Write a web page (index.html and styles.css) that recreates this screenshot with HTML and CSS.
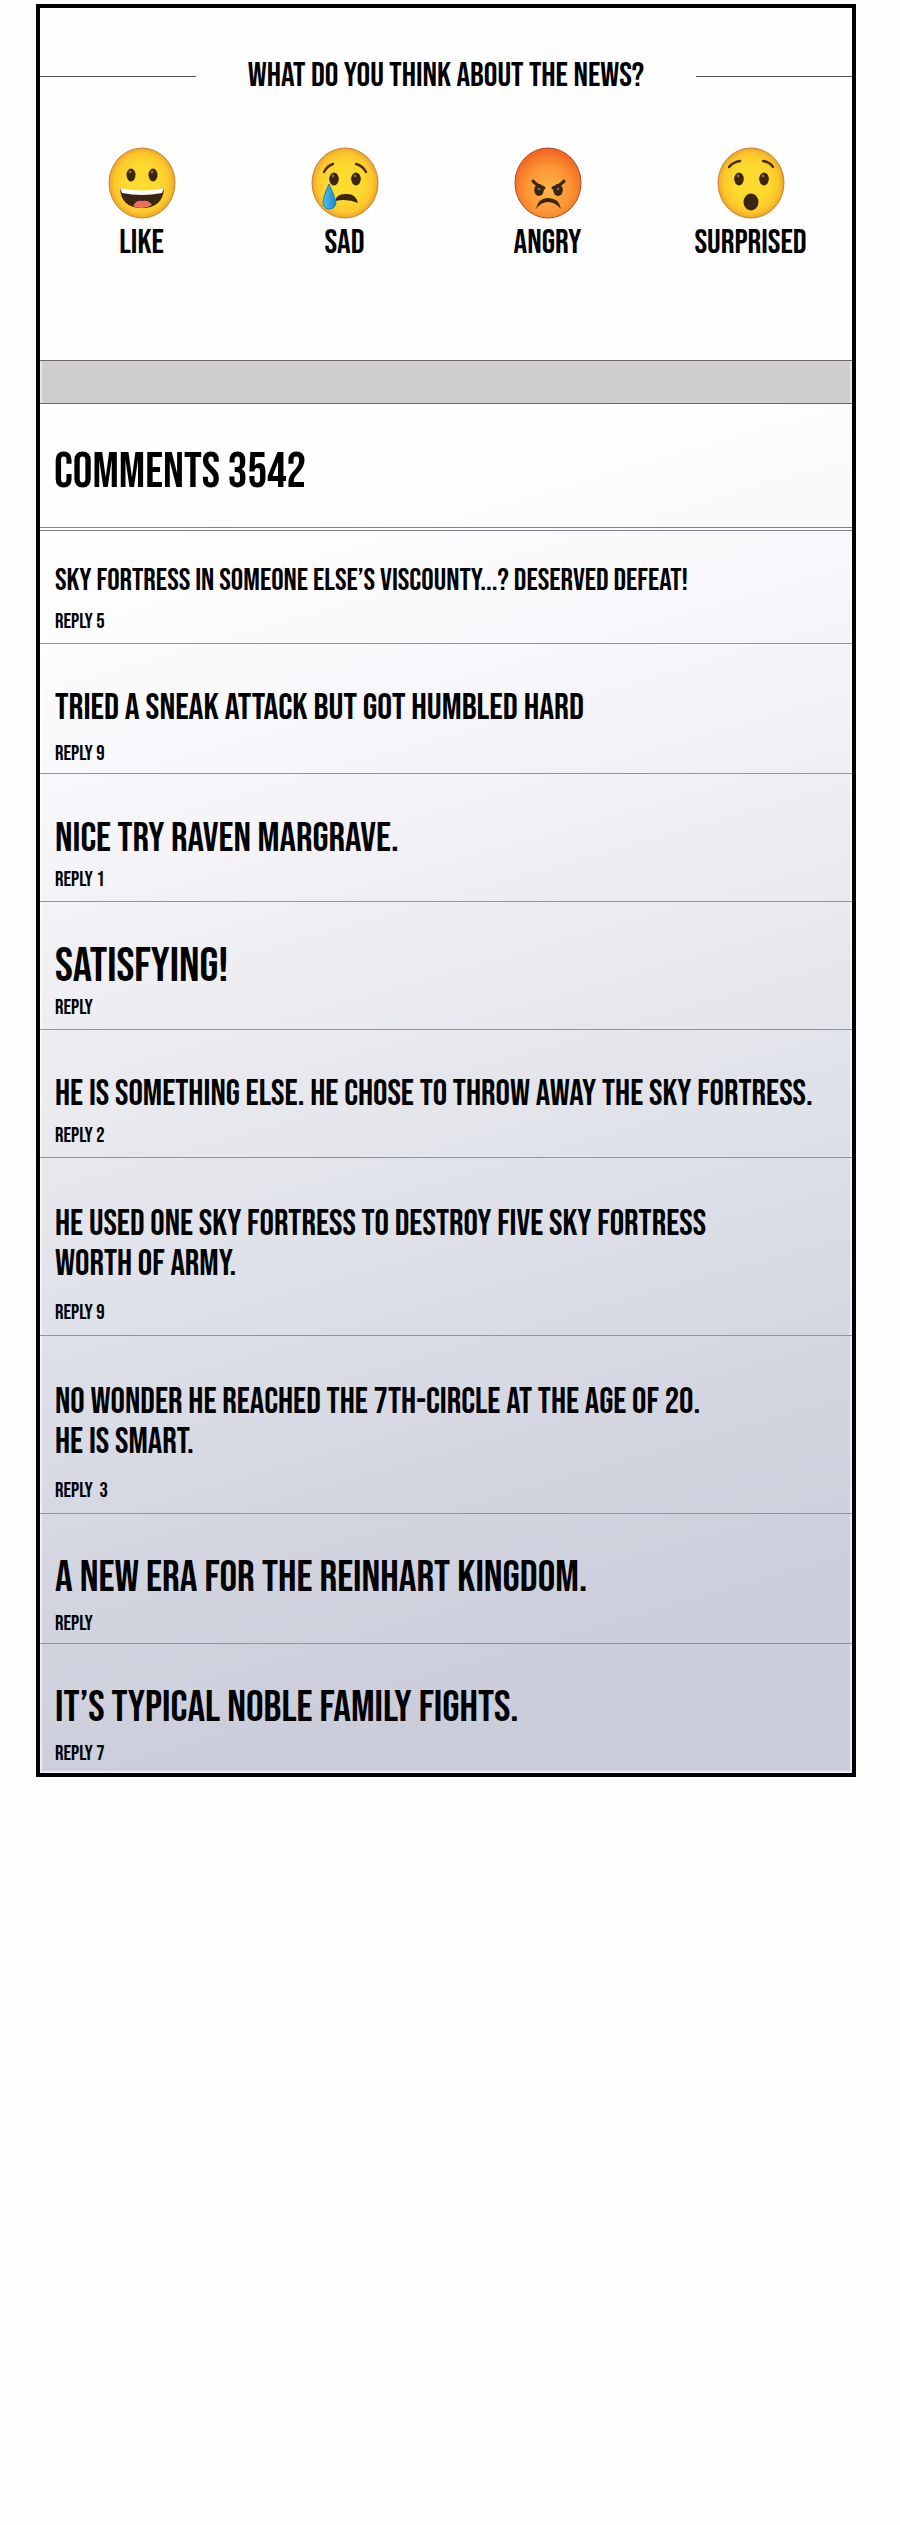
FILE: index.html
```html
<!DOCTYPE html>
<html lang="en">
<head>
    <meta charset="UTF-8">
    <meta name="viewport" content="width=device-width, initial-scale=1.0">
    <title>News Comments</title>
    <link rel="stylesheet" href="styles.css">
</head>
<body>
    <!-- Gradients shared by the faces -->
    <svg class="defs" width="0" height="0" aria-hidden="true">
        <defs>
            <radialGradient id="yellow">
                <stop offset="0.5" stop-color="#fddb2e"/>
                <stop offset="0.85" stop-color="#fbc62b"/>
                <stop offset="1" stop-color="#efa329"/>
            </radialGradient>
            <radialGradient id="red" cx="0.5" cy="0.6" r="0.66">
                <stop offset="0" stop-color="#fdb648"/>
                <stop offset="0.5" stop-color="#fb9634"/>
                <stop offset="1" stop-color="#f0561e"/>
            </radialGradient>
            <linearGradient id="tear" x1="0" x2="1">
                <stop offset="0" stop-color="#51c2ee"/>
                <stop offset="1" stop-color="#1687c9"/>
            </linearGradient>
        </defs>
    </svg>

    <main class="container">
        <section class="poll">
            <h2 class="poll-title">WHAT DO YOU THINK ABOUT THE NEWS?</h2>
            <div class="reactions">
                <button type="button" class="reaction">
                    <svg class="face" viewBox="0 0 68 72" aria-hidden="true">
                        <ellipse cx="34" cy="36" rx="33" ry="35" fill="url(#yellow)" stroke="#c88235"/>
                        <g fill="#3b2413">
                            <ellipse cx="23" cy="28" rx="4.5" ry="6.5"/>
                            <ellipse cx="45" cy="28" rx="4.5" ry="6.5"/>
                            <path d="M12 41Q34 48 56 41Q55 61 34 61Q13 61 12 41Z"/>
                        </g>
                        <path d="M12 41Q34 46 56 41L54 46Q34 50 14 46Z" fill="#fff"/>
                        <path d="M25 59Q28 53 34 54Q41 53 44 58Q39 61 34 61Q29 61 25 59Z" fill="#ed6d61"/>
                        <g fill="#8d6a4b">
                            <circle cx="22" cy="25" r="1.4"/>
                            <circle cx="44" cy="25" r="1.4"/>
                        </g>
                    </svg>
                    LIKE
                </button>
                <button type="button" class="reaction">
                    <svg class="face" viewBox="0 0 68 72" aria-hidden="true">
                        <ellipse cx="34" cy="36" rx="33" ry="35" fill="url(#yellow)" stroke="#c88235"/>
                        <g fill="#3b2413">
                            <ellipse cx="23" cy="32" rx="4.8" ry="6.5"/>
                            <ellipse cx="45" cy="32" rx="4.8" ry="6.5"/>
                            <path d="M24 54Q26 46 36 47Q45 47 47 56Q36 51 24 54Z"/>
                        </g>
                        <g fill="none" stroke="#4a2d12" stroke-width="2.4" stroke-linecap="round">
                            <path d="M13 25Q16 19 22 17"/>
                            <path d="M45 17Q52 19 55 25"/>
                        </g>
                        <path d="M18 37Q12 50 12 56Q13 62 18 62Q24 62 25 56Q24 50 18 37Z" fill="url(#tear)" stroke="#277da8"/>
                        <g fill="#8d6a4b">
                            <circle cx="22" cy="29" r="1.4"/>
                            <circle cx="44" cy="29" r="1.4"/>
                        </g>
                    </svg>
                    SAD
                </button>
                <button type="button" class="reaction">
                    <svg class="face" viewBox="0 0 68 72" aria-hidden="true">
                        <ellipse cx="34" cy="36" rx="33" ry="35" fill="url(#red)" stroke="#b9451d"/>
                        <g fill="#3b2413">
                            <ellipse cx="25" cy="43" rx="4.8" ry="6"/>
                            <ellipse cx="44" cy="43" rx="4.8" ry="6"/>
                            <path d="M22 62Q24 51 34 51Q45 51 47 62Q41 55 34 55Q27 55 22 62Z"/>
                        </g>
                        <g fill="none" stroke="#3b2413" stroke-width="3" stroke-linecap="round">
                            <path d="M19 34Q22 38 30 41"/>
                            <path d="M50 34Q47 38 39 41"/>
                        </g>
                        <g fill="#8d6a4b">
                            <circle cx="25" cy="42" r="1.3"/>
                            <circle cx="44" cy="42" r="1.3"/>
                        </g>
                    </svg>
                    ANGRY
                </button>
                <button type="button" class="reaction">
                    <svg class="face" viewBox="0 0 68 72" aria-hidden="true">
                        <ellipse cx="34" cy="36" rx="33" ry="35" fill="url(#yellow)" stroke="#c88235"/>
                        <g fill="#3b2413">
                            <ellipse cx="22" cy="32" rx="4.8" ry="6.5"/>
                            <ellipse cx="47" cy="32" rx="4.8" ry="6.5"/>
                            <ellipse cx="34" cy="55" rx="7.5" ry="8.5"/>
                        </g>
                        <g fill="none" stroke="#4a2d12" stroke-width="2.4" stroke-linecap="round">
                            <path d="M12 20Q16 15 23 14"/>
                            <path d="M46 14Q53 15 56 20"/>
                        </g>
                        <g fill="#8d6a4b">
                            <circle cx="21" cy="29" r="1.4"/>
                            <circle cx="46" cy="29" r="1.4"/>
                        </g>
                    </svg>
                    SURPRISED
                </button>
            </div>
        </section>

        <div class="divider"></div>

        <section class="comments">
            <h1 class="comments-title">COMMENTS 3542</h1>

            <article class="comment first">
                <p class="text small">SKY FORTRESS IN SOMEONE ELSE’S VISCOUNTY...? DESERVED DEFEAT!</p>
                <button type="button" class="reply">REPLY 5</button>
            </article>
            <article class="comment roomy">
                <p class="text regular">TRIED A SNEAK ATTACK BUT GOT HUMBLED HARD</p>
                <button type="button" class="reply">REPLY 9</button>
            </article>
            <article class="comment">
                <p class="text medium">NICE TRY RAVEN MARGRAVE.</p>
                <button type="button" class="reply">REPLY 1</button>
            </article>
            <article class="comment">
                <p class="text huge">SATISFYING!</p>
                <button type="button" class="reply">REPLY</button>
            </article>
            <article class="comment">
                <p class="text">HE IS SOMETHING ELSE. HE CHOSE TO THROW AWAY THE SKY FORTRESS.</p>
                <button type="button" class="reply">REPLY 2</button>
            </article>
            <article class="comment long">
                <p class="text">HE USED ONE SKY FORTRESS TO DESTROY FIVE SKY FORTRESS<br>WORTH OF ARMY.</p>
                <button type="button" class="reply">REPLY 9</button>
            </article>
            <article class="comment long">
                <p class="text">NO WONDER HE REACHED THE 7TH-CIRCLE AT THE AGE OF 20.<br>HE IS SMART.</p>
                <button type="button" class="reply">REPLY  3</button>
            </article>
            <article class="comment roomy">
                <p class="text large">A NEW ERA FOR THE REINHART KINGDOM.</p>
                <button type="button" class="reply">REPLY</button>
            </article>
            <article class="comment roomy">
                <p class="text large">IT’S TYPICAL NOBLE FAMILY FIGHTS.</p>
                <button type="button" class="reply">REPLY 7</button>
            </article>
        </section>
    </main>
</body>
</html>
```

FILE: styles.css
```css
* {
    box-sizing: border-box;
}
body {
    margin: 0;
    padding: 4px 44px 40px 36px;
    background: #fdfdfd;
    color: #000;
    font-family: "Bebas Neue", "Liberation Sans Narrow", "Liberation Sans", sans-serif;
}
h1, h2, p {
    margin: 0;
    font-weight: normal;
}
button {
    border: none;
    padding: 0;
    background: none;
    color: inherit;
    font: inherit;
    cursor: pointer;
}
.defs {
    display: block;
}
.container {
    border: 4px solid #000;
    background: #fefefe;
}

/* Reactions */
.poll {
    padding: 48px 0 97px;
}
.poll-title {
    display: flex;
    align-items: center;
    justify-content: space-between;
    font-size: 34px;
    line-height: 40px;
    white-space: nowrap;
}
.poll-title::before,
.poll-title::after {
    content: "";
    width: 156px;
    height: 1px;
    background: #555;
}
.reactions {
    display: grid;
    grid-template-columns: repeat(4, 1fr);
    margin-top: 51px;
}
.reaction {
    display: flex;
    flex-direction: column;
    align-items: center;
    gap: 4px;
    font-size: 34px;
    line-height: 40px;
}
.face {
    width: 68px;
    height: 72px;
}
.divider {
    height: 44px;
    border: solid #6a686a;
    border-width: 1px 0;
    background: #d0cdcf;
    box-shadow: inset 2px 0 #e6e5e6, inset -2px 0 #e6e5e6;
}

/* Comments */
.comments {
    background: linear-gradient(164deg, #fefefe 10%, #f8f8fc 24%, #ececf0 42%, #dee1e8 58%, #d2d5e0 75%, #cccddb 88%);
    box-shadow: inset 0 0 0 2px rgba(255, 255, 255, 0.6);
}
.comments-title {
    padding: 44px 14px 29px;
    border-bottom: 4px double #83838c;
    font-size: 49px;
    line-height: 50px;
}
.comment {
    display: flex;
    flex-direction: column;
    align-items: flex-start;
    gap: 11px;
    padding: 45px 15px 11px;
    border-bottom: 1px solid #92939e;
}
.comment:last-child {
    border-bottom: none;
}
.comment.first {
    padding-top: 30px;
}
.comment.roomy {
    gap: 16px;
    padding: 44px 15px 9px;
}
.comment.long {
    gap: 18px;
    padding: 47px 15px 12px;
}
.text {
    font-size: 36px;
    line-height: 40px;
}
.text.small {
    font-size: 31px;
}
.text.regular {
    font-size: 37px;
}
.text.medium {
    font-size: 41px;
}
.text.large {
    font-size: 44px;
}
.text.huge {
    font-size: 48px;
}
.reply {
    font-size: 21px;
    line-height: 20px;
    white-space: pre;
}
```
